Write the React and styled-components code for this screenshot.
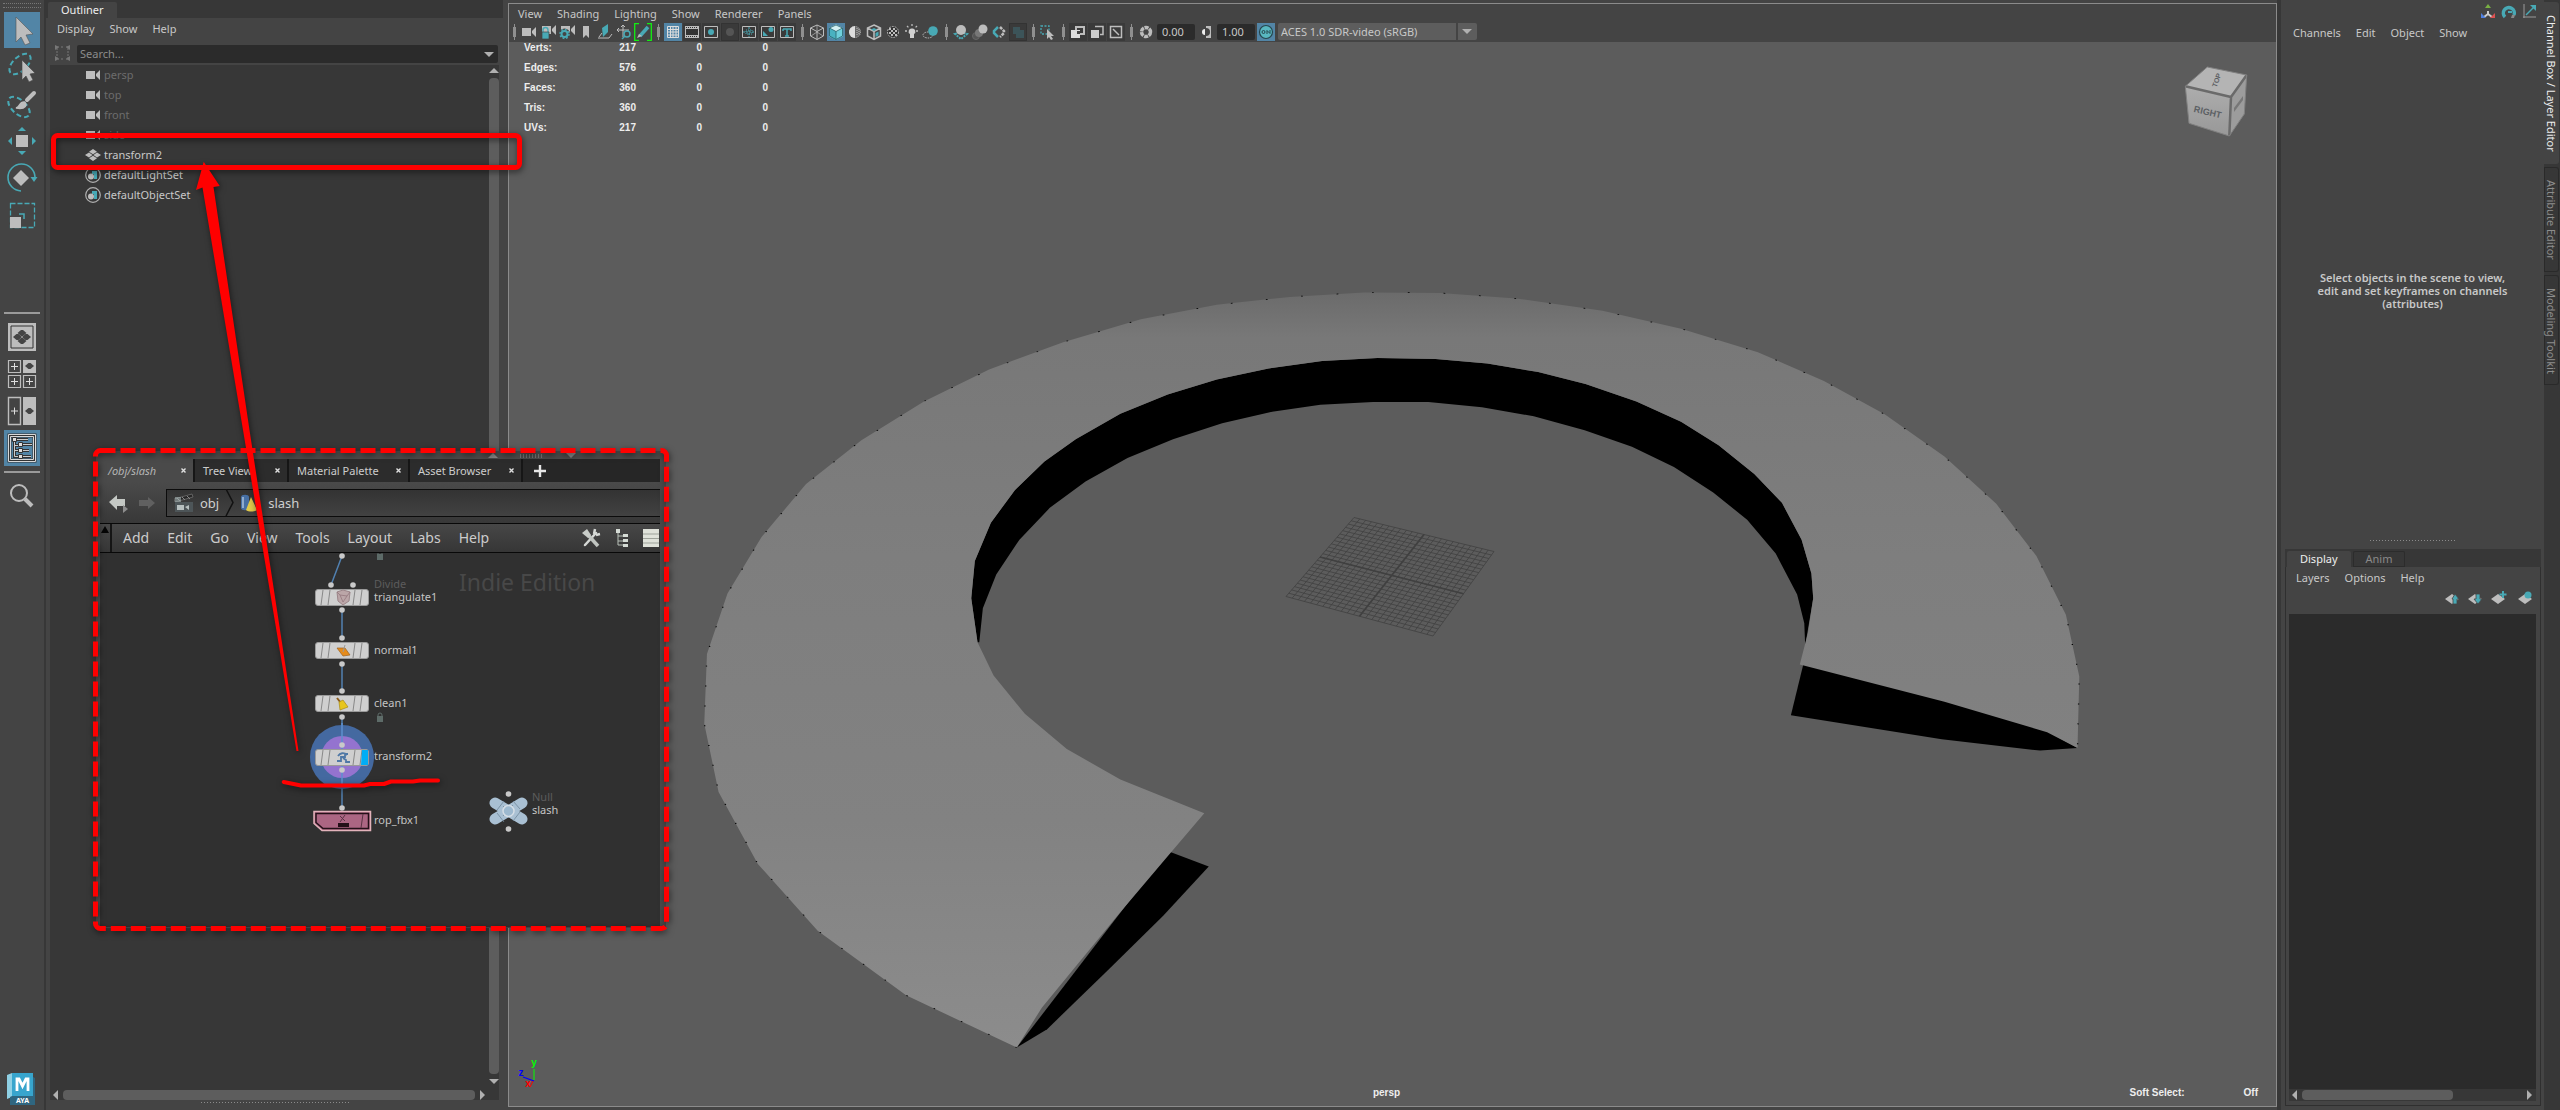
import React from "react";
import styled, { createGlobalStyle, css } from "styled-components";

const c = {
  panel: "#444444",
  dark: "#373737",
  darker: "#2b2b2b",
  view: "#5c5c5c",
  line: "#8b8b8b",
  thumb: "#5d5d5d",
  text: "#c8c8c8",
  white: "#eeeeee",
  dim: "#6c6c6c",
  icon: "#bdbdbd",
  teal: "#48a9b5",
  accent: "#5285a6",
  red: "#ff0000",
};

const Global = createGlobalStyle`
  *, *::before, *::after { box-sizing: border-box; }
  html, body { margin: 0; background: ${c.panel}; }
  body, button, input, select { font-family: "Noto Sans", "Open Sans", sans-serif; font-size: 11px; line-height: 16px; color: ${c.text}; }
  button, input, select { border: 0; margin: 0; padding: 0; background: none; border-radius: 0; }
  svg { display: block; }
`;

/* ---------- page frame ---------- */

const Page = styled.div`
  position: relative;
  display: flex;
  height: 100vh;
  overflow: hidden;
  background: ${c.panel};
`;

const Toolbox = styled.nav`
  display: flex;
  flex-direction: column;
  align-items: center;
  gap: 1px;
  width: 46px;
  padding: 3px 4px 4px;
  border-right: 2px solid ${c.dark};
  flex: none;
`;

const Grip = styled.div`
  width: ${(p) => p.$width}px;
  height: ${(p) => p.$height || 1}px;
  background-image: linear-gradient(90deg, #8a8a8a 1px, transparent 1px);
  background-size: 3px 1px;
  flex: none;
`;

const ToolGrip = styled.div`
  width: 38px;
  height: 5px;
  margin-bottom: 3px;
  border-top: 1px dotted #777777;
  border-bottom: 1px dotted #777777;
`;

const ToolButton = styled.button`
  display: grid;
  place-items: center;
  width: 36px;
  height: 36px;
  flex: none;
  background: ${(p) => (p.$active ? c.accent : "transparent")};
`;

const ToolRule = styled.hr`
  width: 36px;
  height: 2px;
  border: 0;
  margin: ${(p) => (p.$first ? "78px 0 4px" : "4px 0")};
  background: #9a9a9a;
  flex: none;
`;

const Logo = styled.div`
  margin-top: auto;
`;

/* ---------- menus and scroll bars ---------- */

const MenuBar = styled.div`
  display: flex;
  gap: ${(p) => p.$gap || 15}px;
  height: ${(p) => p.$height || 22}px;
  padding-left: ${(p) => p.$left || 9}px;
  align-items: center;
  flex: none;
`;

const MenuButton = styled.button`
  white-space: nowrap;
  color: ${c.text};
`;

const VScroll = styled.div`
  display: flex;
  flex-direction: column;
  align-items: center;
  width: 10px;
  padding: 3px 0 6px;
  gap: 5px;
`;

const HScroll = styled.div`
  display: flex;
  align-items: center;
  height: 10px;
  padding: 0 ${(p) => p.$right}px 0 3px;
  gap: 5px;
  flex: none;
`;

const Thumb = styled.div`
  flex: ${(p) => p.$grow || 1};
  align-self: stretch;
  border-radius: 4px;
  background: ${c.thumb};
`;

const Rest = styled.div`
  flex: ${(p) => p.$grow};
`;

const arrowShape = {
  up: css`border-width: 0 5px 5px; border-bottom-color: #b0b0b0;`,
  down: css`border-width: 5px 5px 0; border-top-color: #b0b0b0;`,
  left: css`border-width: 5px 5px 5px 0; border-right-color: #b0b0b0;`,
  right: css`border-width: 5px 0 5px 5px; border-left-color: #b0b0b0;`,
};

const Arrow = styled.span`
  width: 0;
  height: 0;
  flex: none;
  border: solid transparent;
  ${(p) => arrowShape[p.$dir]}
`;

/* ---------- outliner ---------- */

const Outliner = styled.section`
  display: flex;
  flex-direction: column;
  width: 457px;
  flex: none;
`;

const TabStrip = styled.div`
  display: flex;
  gap: 2px;
  height: 18px;
  padding: 2px 2px 0;
  background: ${c.dark};
  flex: none;
`;

const Tab = styled.button`
  padding: 0 13px;
  border-radius: 2px 2px 0 0;
  color: ${(p) => (p.$active ? c.white : "#8a8a8a")};
  background: ${(p) => (p.$active ? c.panel : c.dark)};
  box-shadow: ${(p) => (p.$active ? "none" : "inset 0 0 0 1px #2c2c2c")};
`;

const SearchRow = styled.div`
  display: flex;
  gap: 7px;
  height: 25px;
  padding: 5px 5px 2px 9px;
  flex: none;
`;

const SearchBox = styled.label`
  display: flex;
  flex: 1;
  align-items: center;
  padding: 0 4px 0 3px;
  border-radius: 2px;
  background: ${c.darker};
`;

const SearchInput = styled.input`
  flex: 1;
  min-width: 0;
  outline: 0;
  &::placeholder { color: #8c8c8c; opacity: 1; }
`;

const TreeBox = styled.div`
  display: flex;
  flex-direction: column;
  flex: 1;
  margin: 0 4px 2px;
  background: ${c.dark};
`;

const TreeBody = styled.div`
  display: flex;
  flex: 1;
`;

const Tree = styled.ul`
  flex: 1;
  margin: 0;
  padding: 0 0 0 35px;
  list-style: none;
`;

const TreeRow = styled.li`
  display: flex;
  align-items: center;
  gap: 3px;
  height: 20px;
  color: ${(p) => (p.$dim ? c.dim : c.text)};
`;

const OutlinerFoot = styled.div`
  display: flex;
  justify-content: center;
  height: 8px;
`;

/* ---------- viewport ---------- */

const Viewport = styled.main`
  display: flex;
  flex-direction: column;
  flex: 1;
  min-width: 0;
  margin: 3px 0 3px 5px;
  border: 1px solid ${c.line};
  background: ${c.view};
`;

const ViewHead = styled.div`
  height: 38px;
  background: ${c.panel};
  flex: none;
`;

const IconBar = styled.div`
  display: flex;
  gap: 1px;
  height: 18px;
`;

const IconButton = styled.button`
  display: grid;
  place-items: center;
  width: 18px;
  height: 18px;
  flex: none;
  background: ${(p) => (p.$active ? c.accent : p.$boxed ? "#3a3a3a" : "transparent")};
`;

const Separator = styled.span`
  width: 10px;
  height: 18px;
  flex: none;
  background:
    linear-gradient(#8f8f8f, #8f8f8f) center / 3px 10px no-repeat,
    linear-gradient(#8f8f8f, #8f8f8f) center / 1px 16px no-repeat;
`;

const NumberInput = styled.input`
  width: 38px;
  height: 16px;
  margin: 1px 1px;
  padding-left: 5px;
  border-radius: 2px;
  background: ${c.darker};
`;

const ColorSpace = styled.label`
  display: flex;
  align-items: center;
  width: 199px;
  height: 17px;
  margin-left: 2px;
  padding-right: 5px;
  border-radius: 2px;
  background: linear-gradient(90deg, #5d5d5d 178px, #444444 178px, #444444 180px, #5d5d5d 180px);
`;

const ColorSelect = styled.select`
  flex: 1;
  padding-left: 3px;
  appearance: none;
  outline: 0;
`;

const Stage = styled.div`
  display: grid;
  grid-template: minmax(0, 1fr) / minmax(0, 1fr);
  flex: 1;
  min-height: 0;
  & > * { grid-area: 1 / 1; }
`;

const Scene = styled.svg`
  width: 100%;
  height: 100%;
`;

const Hud = styled.div`
  display: flex;
  flex-direction: column;
  justify-content: space-between;
  font: bold 10px/12px "Liberation Sans", Arial, sans-serif;
  color: ${c.white};
  z-index: 1;
`;

const Stats = styled.table`
  width: 244px;
  margin-left: 15px;
  border-collapse: collapse;
  table-layout: fixed;
  th, td { height: 20px; padding: 0; text-align: right; font-weight: bold; vertical-align: top; line-height: 12px; }
  th { width: 52px; text-align: left; }
  th + td { width: 60px; }
`;

const HudFoot = styled.div`
  display: grid;
  grid-template-columns: 1fr auto 1fr;
  height: 19px;
  padding: 0 18px 0 6px;
`;

const SoftSelect = styled.span`
  display: flex;
  justify-content: flex-end;
  gap: 59px;
`;

/* ---------- channel box ---------- */

const Channels = styled.aside`
  display: flex;
  flex-direction: column;
  width: 267px;
  border-left: 4px solid ${c.dark};
  flex: none;
`;

const CornerIcons = styled.div`
  display: flex;
  justify-content: flex-end;
  gap: 5px;
  height: 24px;
  padding: 4px 6px 0 0;
`;

const Hint = styled.p`
  flex: none;
  width: 200px;
  margin: 230px auto 0;
  font-weight: 600;
  line-height: 13px;
  text-align: center;
`;

const LayerPanel = styled.section`
  display: flex;
  flex-direction: column;
  align-items: stretch;
  flex: 0 0 51vh;
  margin: auto 3px 4px 4px;
`;

const GripRow = styled.div`
  display: flex;
  justify-content: center;
  height: 9px;
`;

const LayerFrame = styled.div`
  display: flex;
  flex-direction: column;
  flex: 1;
  border: 1px solid #2f2f2f;
  border-top: 0;
`;

const LayerIcons = styled.div`
  display: flex;
  justify-content: flex-end;
  gap: 7px;
  height: 25px;
  padding: 1px 7px 0 0;
`;

const LayerList = styled.div`
  display: flex;
  flex-direction: column;
  justify-content: flex-end;
  flex: 1;
  margin: 0 4px 4px 3px;
  background: ${c.darker};
`;

const LayerScroll = styled.div`
  height: 12px;
  padding-top: 1px;
  background: ${c.dark};
`;

const SideTabs = styled.nav`
  display: flex;
  flex-direction: column;
  gap: 3px;
  width: 16px;
  padding-top: 2px;
  background: ${c.dark};
  flex: none;
`;

const SideTab = styled.button`
  writing-mode: vertical-rl;
  width: 15px;
  line-height: 15px;
  padding: 13px 0 12px;
  text-align: left;
  border-radius: 0 3px 3px 0;
  color: ${(p) => (p.$active ? c.white : "#8d8d8d")};
  background: ${(p) => (p.$active ? c.panel : c.dark)};
  box-shadow: ${(p) => (p.$active ? "none" : "inset 0 0 0 1px #2a2a2a")};
`;

/* ---------- floating node editor ---------- */

const NodeWindow = styled.section`
  position: absolute;
  left: 96px;
  top: 451px;
  display: flex;
  flex-direction: column;
  width: 570px;
  height: 477px;
  padding: 0 6px 1px 4px;
  background: #4a4a4a;
`;

const WindowGrip = styled.div`
  display: flex;
  justify-content: center;
  align-items: flex-end;
  gap: 22px;
  height: 8px;
  padding: 0 0 1px 304px;
  opacity: 0.6;
`;

const PaneTabs = styled.div`
  display: flex;
  height: 23px;
  background: #262626;
  flex: none;
`;

const PaneTab = styled.button`
  display: flex;
  justify-content: space-between;
  align-items: center;
  width: ${(p) => p.$width}px;
  padding: 0 6px 0 8px;
  white-space: nowrap;
  border-right: 2px solid #161616;
  color: ${(p) => (p.$active ? "#b5b5b5" : "#cccccc")};
  font-style: ${(p) => (p.$active ? "italic" : "normal")};
  background: ${(p) => (p.$active ? "#4a4a4a" : "#2c2c2c")};
`;

const AddTab = styled.button`
  width: 34px;
`;

const PathRow = styled.div`
  display: flex;
  align-items: center;
  height: 41px;
  padding-left: 9px;
  gap: 10px;
  background: linear-gradient(#4a4a4a, #383838);
  flex: none;
`;

const PathBox = styled.div`
  display: flex;
  align-items: center;
  flex: 1;
  gap: 6px;
  height: 28px;
  padding-left: 7px;
  border: 1px solid #0c0c0c;
  border-right: 0;
  background: linear-gradient(#333333, #424242);
`;

const Crumb = styled.button`
  display: flex;
  align-items: center;
  gap: ${(p) => p.$gap}px;
  font-size: 13px;
  color: #cfcfcf;
`;

const NodeMenu = styled.div`
  display: flex;
  align-items: center;
  gap: 18px;
  height: 30px;
  border: solid #080808;
  border-width: 1px 0;
  background: linear-gradient(#474747, #363636);
  flex: none;
  button { font-size: 14px; color: #cccccc; }
`;

const MenuHandle = styled.span`
  display: flex;
  align-self: stretch;
  justify-content: center;
  width: 12px;
  margin-right: -7px;
  padding-top: 2px;
  border-right: 2px solid #151515;
`;

const MenuIcons = styled.span`
  display: flex;
  align-items: center;
  gap: 14px;
  margin-left: auto;
  padding-right: 1px;
`;

const Network = styled.div`
  position: relative;
  flex: 1;
  overflow: hidden;
  background: #303030;
`;

const NodeLabel = styled.span`
  position: absolute;
  left: ${(p) => p.$x}px;
  top: ${(p) => p.$y}px;
  white-space: nowrap;
  line-height: 14px;
  color: ${(p) => (p.$dim ? "#5c5c5c" : "#c4c4c4")};
`;

const Edition = styled.span`
  position: absolute;
  left: 359px;
  top: 14px;
  font-size: 23px;
  line-height: 30px;
  color: #484848;
`;

const Markup = styled.svg`
  position: absolute;
  left: 0;
  top: 0;
  pointer-events: none;
  filter: drop-shadow(1px 2px 3px rgba(0, 0, 0, 0.55));
`;

/* ---------- drawings ---------- */

const Svg = ({ s = 18, w, h, box, children }) => (
  <svg width={w || s} height={h || s} viewBox={box || `0 0 ${w || s} ${h || s}`} fill="none" aria-hidden="true">
    {children}
  </svg>
);

const I = c.icon;
const T = c.teal;

const tools = {
  select: <path d="M12 5v25l5-5 4 8 5-2-4-8 7-1z" fill={I} stroke="#555" strokeWidth=".6" />,
  lasso: (
    <>
      <ellipse cx="16" cy="15" rx="13" ry="7" transform="rotate(-43 16 15)" stroke={T} strokeWidth="2" strokeDasharray="5 3" />
      <path d="M18 11v20l4-4 3 6 4-2-3-6 5-1z" fill={I} stroke={c.panel} strokeWidth=".6" />
    </>
  ),
  paint: (
    <>
      <ellipse cx="15" cy="21" rx="13" ry="7" transform="rotate(42 15 21)" stroke={T} strokeWidth="2" strokeDasharray="5 3" />
      <path d="m23 14 7-7" stroke={I} strokeWidth="4" strokeLinecap="round" />
      <path d="M12 22c4-1 3-6 8-6 4 2 2 8-8 6z" fill={I} stroke={I} strokeWidth="1.500" />
    </>
  ),
  move: (
    <>
      <path d="M12 12h12v12H12z" fill={I} />
      <path d="m18 4 4 4h-8zM18 32l4-4h-8zM4 18l4-4v8zM32 18l-4-4v8z" fill={T} />
    </>
  ),
  rotate: (
    <>
      <path d="m17 10 8 8-8 8-8-8z" fill={I} />
      <path d="M17 31A13.500 13.500 0 1 1 31 17" stroke={T} strokeWidth="1.600" />
      <path d="M26.500 17h7l-3.500 5z" fill={T} />
    </>
  ),
  scale: (
    <>
      <path d="M6.500 6.500h24v24h-24z" stroke={T} strokeWidth="1.300" strokeDasharray="5 2" />
      <path d="M6 20h11v11H6z" fill={I} />
      <path d="M15 17h5v5" stroke={T} strokeWidth="1.500" />
    </>
  ),
};

const diamond = (x, y) => (
  <path d={`M${x - 4.5} ${y}l3.500-3h2l3.500 3l-3.500 3h-2z`} fill="#444" />
);

const layouts = {
  single: (
    <>
      <path d="M4 4h28v28H4z" fill={I} />
      <path d="M7 7h22v22H7z" stroke="#333" />
      {diamond(18, 14)}{diamond(13.5, 18)}{diamond(22.5, 18)}{diamond(18, 22)}
    </>
  ),
  four: (
    <>
      <path d="M19 4h13v13H19z" fill={I} />
      <path d="M4.500 4.500h12v12h-12zM4.500 19.500h12v12h-12zM19.500 19.500h12v12h-12z" stroke={I} strokeWidth="1.200" />
      <path d="M7 10.500h7M10.500 7v7M7 25.500h7M10.500 22v7M22 25.500h7M25.500 22v7" stroke="#ddd" />
      {diamond(25.5, 10)}
    </>
  ),
  two: (
    <>
      <path d="M4.500 4.500h12v27h-12z" stroke={I} strokeWidth="1.400" />
      <path d="M19 4h13v28H19z" fill={I} />
      <path d="M7 18h7M10.500 14.500v7" stroke="#ddd" />
      {diamond(25.5, 18)}
    </>
  ),
  outline: (
    <>
      <path d="M5.500 5.500h25v25h-25z" stroke="#333" strokeWidth="4" />
      <path d="M4.500 4.500h27v27h-27zM6.500 6.500h23v23h-23z" stroke="#d8d8d8" />
      <path d="M10.500 11v15.500H18M11 15.500h6M11 20.500h6M12 9.500h12M19 14.500h9M19 20.500h6M19 26.500h8" stroke="#333" strokeWidth="3" />
      <path d="M10.500 11v15.500H18M11 15.500h6M11 20.500h6M12 9.500h12M19 14.500h9M19 20.500h6M19 26.500h8" stroke="#ccc" />
      <path d="M8.500 7.500h4v4h-4zM14.500 12.500h4v4h-4zM14.500 18.500h4v4h-4zM14.500 24.500h4v4h-4z" fill="#ddd" stroke="#333" />
    </>
  ),
};

const camera = (x = 0, y = 0) => <path d={`M${x + 2} ${y + 5}h9v8H${x + 2}zM${x + 16} ${y + 4}v10l-4-4v-2z`} fill={I} />;
const frame = <path d="M2.500 3.500h13v11h-13z" stroke={I} />;
const cubeEdges = "M9 2l6.500 3v8L9 16.500 2.500 13V5zM2.500 5 9 8.500 15.500 5M9 8.500v8";

const viewIcons = {
  camera: camera(),
  lock: <>{camera(1, -2)}<path d="M4 9V7a2.500 2.500 0 0 1 5 0v2" stroke={T} strokeWidth="1.400" /><path d="M3 9h7v7H3z" fill={T} stroke="#444" strokeWidth=".7" /></>,
  gear: <>{camera(1, -2)}<circle cx="6.500" cy="11" r="5.500" fill={c.panel} /><circle cx="6.500" cy="11" r="3" stroke={T} strokeWidth="2" /><circle cx="6.500" cy="11" r="4.500" stroke={T} strokeWidth="1.500" strokeDasharray="1.800 1.700" /></>,
  bookmark: <path d="M6 3h6v12l-3-3-3 3z" fill={I} />,
  plane: <><path d="M2 15h11l3-4" stroke={I} /><path d="M3 14l3-4" stroke={I} /><path d="m6 5 6-4v8l-5 5z" fill={T} /></>,
  zoom: <><path d="M8 2v12M2 7h12M6 4l2-2 2 2M4 5 2 7l2 2" stroke={I} /><circle cx="12" cy="11" r="3" fill={c.panel} stroke={T} strokeWidth="1.500" /><path d="m10 13-3 3" stroke={T} strokeWidth="1.500" /></>,
  pencil: <><path d="M5 .7H.7v16.600H5M13 .7h4.300v16.600H13" stroke="#12ef12" strokeWidth="1.300" /><path d="m6 13 8-9" stroke={T} strokeWidth="3.500" /><path d="m3 15 2-4 3 2z" fill={I} /></>,
  grid: <path d="M3.500 3.500h11v11h-11zM6.500 3v12M9 3v12M12 3v12M3 6.500h12M3 9h12M3 12h12" stroke="#ddd" />,
  film: <><path d="M2 3h14v12H2z" fill={I} /><path d="M3 6h12v6H3z" fill="#333" /><path d="M3 4.500h12M3 13.500h12" stroke="#333" strokeDasharray="1 1" /></>,
  dot: <>{frame}<circle cx="9" cy="9" r="3" fill={T} /></>,
  off: <><path d="M.5.5h17v17H.5z" stroke="#333" /><circle cx="9" cy="9" r="4" fill="#555" /></>,
  field: <>{frame}<path d="M9 4v10M3 9h12" stroke={T} strokeDasharray="2 1" /><path d="M6 7h6v4H6z" stroke={T} strokeDasharray="1 1" /></>,
  image: <>{frame}<circle cx="12" cy="6.500" r="2.500" fill={T} /><path d="M4 13V8l5 5z" fill={T} /></>,
  text: <>{frame}<path d="M5 6h8v2M9 6v7M7 13h4M5 6v2" stroke={T} strokeWidth="1.500" /></>,
  wire: <><path d={cubeEdges} stroke={I} /><path d="M9 2v7l-6 4M9 9l6 4" stroke={I} strokeWidth=".7" /></>,
  cube: <><path d="M9 1.500 16 5v8.500L9 17l-7-3.500V5z" fill="#6fd0dc" /><path d="M9 1.500 16 5 9 8.500 2 5z" fill="#d2f0f2" /><path d="M9 8.500V17l-7-3.500V5z" fill="#49b2c1" /><path d={cubeEdges} stroke="#28606a" strokeWidth=".8" /></>,
  half: <><circle cx="9" cy="9" r="5.500" fill="#666" stroke={I} strokeDasharray="1 1" /><path d="M9 3a6 6 0 0 0 0 12z" fill="#ddd" /><path d="M11 5v8M13 6v6" stroke={I} strokeDasharray="1 1" /></>,
  textured: <><path d={cubeEdges} stroke={I} strokeWidth="1.500" /><path d="m9 5 3 1.500-3 1.500-3-1.500zM10.500 10l3-1.500v4l-3 1.500z" fill={T} /></>,
  checker: <><circle cx="9" cy="9" r="6" fill="#333" /><circle cx="9" cy="9" r="5.500" stroke={I} strokeDasharray="2 1" /><path d="M5 6h8M5 10h8" stroke={I} strokeWidth="2" strokeDasharray="2 2" /><path d="M7 8h6M7 12h6" stroke={I} strokeWidth="2" strokeDasharray="2 2" /></>,
  light: <><path d="M9 5.500a3 3 0 0 1 2 5.500v4H7v-4a3 3 0 0 1 2-5.500z" fill="#d0d0d0" /><path d="M9 1v2M2 8h3M13 8h3M4 3l2 2M14 3l-2 2" stroke={I} strokeWidth="1.300" strokeDasharray="2 1" /></>,
  shadow: <><ellipse cx="6" cy="12" rx="5" ry="3" stroke={I} strokeDasharray="1.500 1" /><circle cx="11" cy="8" r="4.800" fill={T} /></>,
  occlusion: <><path d="M3 11l6-2 6 2-6 5z" stroke={T} strokeWidth="2" strokeDasharray="2 1" /><circle cx="9" cy="7" r="5" fill="#bcbcbc" /></>,
  blur: <><circle cx="5" cy="13" r="3.500" fill="#555" stroke="#666" /><circle cx="8" cy="10" r="4" fill="#777" /><circle cx="12" cy="6" r="4.500" fill={I} /></>,
  alias: <><path d="M8 4 4 8v2l4 4" stroke={T} strokeWidth="2.500" /><path d="m10 4 4 4v2l-4 4" stroke={I} strokeWidth="2.500" strokeDasharray="3 1" /></>,
  dof: <><path d="M.5.5h17v17H.5z" stroke="#333" /><path d="M4 4h7v7H4zM7 7h8v8H7z" fill="#3c5459" /></>,
  isolate: <><path d="M2 3h8v8H2z" stroke={T} strokeWidth="1.300" strokeDasharray="2 1.500" /><path d="M8 6v10l2-2 2 3 2-1-2-3h3z" fill={I} /></>,
  overlap: <><path d="M7 4h8v7H7z" stroke={I} strokeWidth="2" /><path d="M2 7h9v8H2z" fill="#ddd" /><path d="M8 8h3v3H8z" fill="#444" /></>,
  stack: <><path d="M7 3.500h8v8h-3" stroke={I} strokeWidth="1.500" /><path d="M3 7h8v8H3z" fill="#ccc" /></>,
  diag: <><path d="M3.500 3.500h11v11h-11z" stroke={I} strokeWidth="1.500" /><path d="m6 6 6 6" stroke={I} strokeWidth="1.500" /></>,
  aperture: <><circle cx="9" cy="9" r="4.500" stroke={I} strokeWidth="3.500" strokeDasharray="4 .8" /></>,
  gamma: <><path d="M9 3h5v12H9v-2a4 4 0 0 0 0-8z" fill={I} /><path d="M8 6a3 3 0 0 0 0 6z" fill="#eee" /></>,
  on: (
    <>
      <circle cx="9" cy="9" r="6.500" fill="#58b7c0" stroke="#26454c" strokeWidth="1.200" />
      <circle cx="6.500" cy="9" r="1.500" stroke="#26454c" />
      <path d="M10 11V7.500l3 3V7" stroke="#26454c" />
    </>
  ),
};

const viewGroups = [
  ["camera", "lock", "gear", "bookmark", "plane", "zoom", "pencil"],
  ["grid", "film", "dot", "off", "field", "image", "text"],
  ["wire", "cube", "half", "textured", "checker", "light", "shadow"],
  ["occlusion", "blur", "alias", "dof"],
  ["isolate"],
  ["overlap", "stack", "diag"],
];
const active = ["grid", "cube"];
const boxed = ["film", "dot", "off", "field", "image", "text", "dof", "overlap", "stack", "diag"];

const outlinerIcons = {
  camera: <path d="M1 4h9v8H1zM15 3v10l-4-4V7z" fill={I} />,
  mesh: <path d="m8 2 4 2.700-4 2.600-4-2.600zM8 8.700l4 2.600L8 14l-4-2.700zM4 5.400 7.600 8 4 10.600 0 8zM12 5.400 16 8l-4 2.600L8.400 8z" fill={I} />,
  set: <><circle cx="8" cy="8" r="7.300" stroke="#b0b0b0" strokeWidth="1.200" /><path d="M7 4h5v8h-3V7H7z" fill={T} /><circle cx="6" cy="9.500" r="3" fill={I} /></>,
};

const nodes = [
  ["persp", "camera", true],
  ["top", "camera", true],
  ["front", "camera", true],
  ["side", "camera", true],
  ["transform2", "mesh", false],
  ["defaultLightSet", "set", false],
  ["defaultObjectSet", "set", false],
];

const stats = [["Verts:", 217], ["Edges:", 576], ["Faces:", 360], ["Tris:", 360], ["UVs:", 217]];

const innerRim =
  "1258,640 1256,590 1245,522 1223,448 1192,390 1152,332 1110,285 1060,244 1003,209 950,185 893,168 835,159 770,157 708,163 648,178 590,200 535,230 482,269 432,320 397,365 364,422 337,488 319,565 315,640 322,728";
const outerRim =
  "366,1543 242,1438 143,1308 76,1174 32,1029 16,892 19,752 42,630 80,517 130,410 192,322 262,244 335,180 418,125 505,79 590,50 672,34 755,25 840,26 925,37 1022,62 1110,98 1196,145 1270,203 1338,270 1405,355 1463,450 1508,555 1541,673 1556,797 1554,941";
const farFoot =
  "324,728 328,660 343,592 369,522 403,458 443,405 490,358 541,320 596,288 652,265 706,251 765,245 827,245 887,256 945,274 1002,302 1055,335 1102,376 1146,427 1184,482 1216,550 1240,632 1248,690 1249,735";

const mix = (a, b, t) => [a[0] + (b[0] - a[0]) * t, a[1] + (b[1] - a[1]) * t];
const corners = [[1354, 517.5], [1494, 551.5], [1433, 636], [1286, 596.5]];
const GroundGrid = () => {
  const n = 24;
  const [A, B, C, D] = corners;
  const seg = (p, q) => `M${p}L${q}`;
  let d = "";
  for (let i = 0; i <= n; i++) {
    const t = i / n;
    d += seg(mix(A, B, t), mix(D, C, t)) + seg(mix(A, D, t), mix(B, C, t));
  }
  return (
    <g stroke="#404040">
      <path d={d} strokeWidth=".8" />
      <path d={seg(mix(A, B, 0.5), mix(D, C, 0.5)) + seg(mix(A, D, 0.5), mix(B, C, 0.5))} strokeWidth="1.800" />
    </g>
  );
};

const SceneDrawing = () => (
  <Scene viewBox="509 42 1767 1064" preserveAspectRatio="xMidYMid meet" fill="none" aria-label="persp view">
    <defs>
      <linearGradient id="shade" x1="0" y1="0" x2="0" y2="1">
        <stop offset="0" stopColor="#6b6b6b" />
        <stop offset=".06" stopColor="#787878" />
        <stop offset=".35" stopColor="#7e7e7e" />
        <stop offset=".7" stopColor="#828282" />
        <stop offset="1" stopColor="#8c8c8c" />
      </linearGradient>
      <linearGradient id="face" x1="0" y1="0" x2="0" y2="1">
        <stop offset="0" stopColor="#adadad" />
        <stop offset="1" stopColor="#989898" />
      </linearGradient>
    </defs>
    <GroundGrid />
    <svg x="690" y="280" width="1400" height="780" viewBox="0 0 1568 1568" preserveAspectRatio="none">
      <polygon points={`${innerRim} ${farFoot}`} fill="#000" />
      <polygon points="1247,772 1405,846 1520,907 1554,941 1512,946 1402,923 1233,875" fill="#000" />
      <polygon points="535,1148 581,1179 530,1278 470,1384 400,1506 366,1543" fill="#000" />
      <polygon
        points={`${outerRim} 1520,909 1405,848 1243,773 1252,710 ${innerRim} 340,795 375,872 422,943 482,1004 576,1072 540,1148 480,1275 394,1463`}
        fill="url(#shade)"
      />
      <polyline points={outerRim} stroke="#000" strokeWidth="1.500" strokeDasharray="2 38" />
    </svg>
    <g strokeLinejoin="round">
      <path d="M2207.300 67 2246.700 75 2231 97 2185.300 86.300z" fill="#b4b4b4" />
      <path d="M2185.300 86.300 2231 97 2229.300 136 2189 123.300z" fill="url(#face)" />
      <path d="M2231 97 2246.700 75 2244.300 114 2229.300 136z" fill="#9c9c9c" />
      <path d="M2185.300 86.300 2231 97 2246.700 75M2231 97l-1.700 39" stroke="#6a6a6a" strokeWidth="2.500" />
      <path d="M2207.300 67 2246.700 75 2244.300 114 2229.300 136 2189 123.300 2185.300 86.300z" stroke="#808080" />
      <path d="m2234 108 9-12v4l-9 12z" fill="#777" />
    </g>
    <g fontFamily="Liberation Sans, Arial, sans-serif" fontWeight="bold" fill="#5c6064" textAnchor="middle">
      <text x="2207" y="115" fontSize="9" transform="rotate(13 2207 115)">RIGHT</text>
      <text x="2219" y="81" fontSize="7" transform="rotate(-70 2219 81)">TOP</text>
    </g>
    <path d="M534 1069v11" stroke="#00ff00" />
    <path d="m523 1077 11 4" stroke="#0000ff" strokeWidth="1.300" />
    <path d="m533 1081-3 6" stroke="#ff0000" />
    <g fontFamily="Liberation Sans, Arial, sans-serif" fontSize="10" fontWeight="bold" textAnchor="middle">
      <text x="534" y="1066" fill="#00ff00">y</text>
      <text x="521" y="1076" fill="#0000ff">z</text>
      <text x="528" y="1087" fill="#ff0000">x</text>
    </g>
  </Scene>
);

const Dot = ({ x, y }) => <circle cx={x} cy={y} r="2.800" fill="#c9c9c9" />;

const NodeBody = ({ x = 215, y, children }) => (
  <g transform={`translate(${x} ${y})`}>
    <rect x=".5" y=".5" width="53" height="16" rx="2.500" fill="#cfcfcf" stroke="#9a9a9a" />
    <path d="M8 1 6 16M15 1l-2 15M40 1l-2 15M47 1l-2 15" stroke="#888" />
    {children}
  </g>
);

const Lock = ({ x, y }) => (
  <g>
    <path d={`M${x - 2} ${y}v-2a2 2 0 0 1 4 0v2`} stroke="#5d6b68" />
    <path d={`M${x - 3} ${y - 1}h6v6h-6z`} fill="#5d6b68" />
  </g>
);

const NetworkDrawing = () => (
  <svg width="560" height="374" fill="none" aria-hidden="true">
    <path d="m242 3-11 29M242 57v28M242 111v27M242 164v28M242 217v38" stroke="#5180b0" strokeWidth="1.500" />
    <Lock x={280} y={2} />
    <Dot x={242} y={3} /><Dot x={231} y={32} /><Dot x={253} y={32} />
    <NodeBody y={36}>
      <path d="m22 3 6-2 7 2-1 9-6 4-5-4z" fill="#bba6a8" stroke="#9b8589" />
      <path d="m25 6 7 1-4 6zM22 3l3 3M35 3l-3 4" stroke="#94777d" strokeWidth=".8" />
    </NodeBody>
    <Dot x={242} y={57} /><Dot x={242} y={85} />
    <NodeBody y={89}>
      <path d="m22 6 8 0 5 7-7 1z" fill="#e58b1b" stroke="#9b6323" strokeWidth=".7" />
      <path d="m28 10 2-7" stroke="#999" />
    </NodeBody>
    <Dot x={242} y={111} /><Dot x={242} y={138} />
    <NodeBody y={142}>
      <path d="m22 3 4 5" stroke="#8d5c1c" strokeWidth="2" />
      <path d="m24 7 4-2 5 7-8 3z" fill="#e7c51c" stroke="#a68a16" strokeWidth=".7" />
    </NodeBody>
    <Dot x={242} y={164} />
    <Lock x={280} y={164} />
    <circle cx="242" cy="204" r="32" fill="#4469a0" />
    <circle cx="242" cy="204" r="21" fill="#9473cf" />
    <path d="M242 170v64" stroke="#5d8fcf" strokeWidth="1.500" />
    <NodeBody y={196}>
      <path d="M47 1h6v15h-7z" fill="#00adf5" />
      <path d="M22 12h4V8h4V5h3M23 7c2-3 6-4 9-1M28 9l3 2v2h4" stroke="#4f78a6" strokeWidth="1.800" />
    </NodeBody>
    <Dot x={242} y={192} /><Dot x={242} y={217} /><Dot x={242} y={255} />
    <path d="M214 258.500h56.500v19H222l-8-7z" fill="#ac6683" stroke="#e3b3bb" strokeWidth="1.500" />
    <path d="M216 260.500h52.500v15H223l-7-6z" stroke="#241018" strokeWidth="1.500" />
    <path d="m263 261-2 14M240 263l5 5M245 262l-5 7" stroke="#5a3344" />
    <path d="M238 270h11v4h-11z" fill="#241018" />
    <g stroke="#a9c0d3" strokeWidth="11" strokeLinecap="round">
      <path d="m395 250 27 16M422 250l-27 16" />
    </g>
    <path d="m397 257 7-9M403 263l10-11M413 248l7 8M403 253l10 10M397 260l7 9M413 268l7-9" stroke="#6f8799" strokeWidth=".8" />
    <circle cx="408.500" cy="258" r="5.500" fill="#9db9cf" stroke="#d5dee6" strokeWidth="1.500" />
    <Dot x={408.5} y={241} /><Dot x={408.5} y={276} />
  </svg>
);

const labels = [
  ["Divide", 274, 24, true],
  ["triangulate1", 274, 37],
  ["normal1", 274, 90],
  ["clean1", 274, 143],
  ["transform2", 274, 196],
  ["rop_fbx1", 274, 260],
  ["Null", 432, 237, true],
  ["slash", 432, 250],
];

const paneTabs = [["/obj/slash", 95, true], ["Tree View", 94], ["Material Palette", 121], ["Asset Browser", 113]];

const Menu = ({ items, ...rest }) => (
  <MenuBar {...rest}>
    {items.map((t) => <MenuButton key={t}>{t}</MenuButton>)}
  </MenuBar>
);

const layerPlane = <path d="m1 9 7-5 7 5-7 5z" fill={I} />;

export default function App() {
  return (
    <Page>
      <Global />
      <Toolbox aria-label="Tools">
        <ToolGrip />
        {Object.entries(tools).map(([k, art]) => (
          <ToolButton key={k} $active={k === "select"} aria-label={k}><Svg s={36}>{art}</Svg></ToolButton>
        ))}
        <ToolRule $first />
        {Object.entries(layouts).map(([k, art]) => (
          <ToolButton key={k} $active={k === "outline"} aria-label={k}><Svg s={36}>{art}</Svg></ToolButton>
        ))}
        <ToolRule />
        <ToolButton aria-label="search">
          <Svg s={36}><circle cx="15" cy="15" r="8" stroke={I} strokeWidth="2" /><path d="m21 21 7 7" stroke={I} strokeWidth="4" /></Svg>
        </ToolButton>
        <Logo>
          <Svg w={30} h={33}>
            <path d="M0 2 5 0v24l-5 2z" fill="#8fd0e4" />
            <path d="M5 0h21v23H5z" fill="#38a5cd" />
            <path d="M26 4l2 1v27H3v-8l2-1h21z" fill="#2f6680" />
            <path d="M10 18V6h2l3.500 7L19 6h2v12" stroke="#fff" strokeWidth="2.800" />
            <text x="15.500" y="30" fontSize="7" fontWeight="bold" fontFamily="Noto Sans, sans-serif" fill="#fff" textAnchor="middle">AYA</text>
          </Svg>
        </Logo>
      </Toolbox>

      <Outliner>
        <TabStrip><Tab $active>Outliner</Tab></TabStrip>
        <Menu items={["Display", "Show", "Help"]} $left={11} />
        <SearchRow>
          <Svg w={15} h={16}>
            <path d="M4 2H2v12h2M11 2h2v12h-2M6 2h3M6 14h3" stroke="#777" strokeDasharray="2 1" />
            <path d="M0 0l4 2-4 3zM15 0l-4 2 4 3zM0 11l4 3-4 2zM15 11l-4 3 4 2z" fill="#777" />
          </Svg>
          <SearchBox><SearchInput aria-label="Search" placeholder="Search..." /><Arrow $dir="down" /></SearchBox>
        </SearchRow>
        <TreeBox>
          <TreeBody>
            <Tree>
              {nodes.map(([name, icon, dim]) => (
                <TreeRow key={name} $dim={dim}><Svg s={16}>{outlinerIcons[icon]}</Svg>{name}</TreeRow>
              ))}
            </Tree>
            <VScroll><Arrow $dir="up" /><Thumb /><Arrow $dir="down" /></VScroll>
          </TreeBody>
          <HScroll $right={14}><Arrow $dir="left" /><Thumb /><Arrow $dir="right" /></HScroll>
        </TreeBox>
        <OutlinerFoot><Grip $width={148} /></OutlinerFoot>
      </Outliner>

      <Viewport>
        <ViewHead>
          <Menu items={["View", "Shading", "Lighting", "Show", "Renderer", "Panels"]} $height={19} />
          <IconBar>
            {viewGroups.map((group, g) => (
              <React.Fragment key={g}>
                <Separator />
                {group.map((k) => (
                  <IconButton key={k} aria-label={k} $active={active.includes(k)} $boxed={boxed.includes(k)}>
                    <Svg>{viewIcons[k]}</Svg>
                  </IconButton>
                ))}
              </React.Fragment>
            ))}
            <Separator />
            <IconButton aria-label="exposure"><Svg>{viewIcons.aperture}</Svg></IconButton>
            <NumberInput aria-label="Exposure" defaultValue="0.00" />
            <IconButton aria-label="gamma"><Svg>{viewIcons.gamma}</Svg></IconButton>
            <NumberInput aria-label="Gamma" defaultValue="1.00" />
            <IconButton $active aria-label="ON"><Svg>{viewIcons.on}</Svg></IconButton>
            <ColorSpace>
              <ColorSelect aria-label="View transform"><option>ACES 1.0 SDR-video (sRGB)</option></ColorSelect>
              <Arrow $dir="down" />
            </ColorSpace>
          </IconBar>
        </ViewHead>
        <Stage>
          <SceneDrawing />
          <Hud>
            <Stats>
              <tbody>
                {stats.map(([k, v]) => (
                  <tr key={k}><th scope="row">{k}</th><td>{v}</td><td>0</td><td>0</td></tr>
                ))}
              </tbody>
            </Stats>
            <HudFoot>
              <span /><span>persp</span>
              <SoftSelect><span>Soft Select:</span><span>Off</span></SoftSelect>
            </HudFoot>
          </Hud>
        </Stage>
      </Viewport>

      <Channels>
        <CornerIcons>
          <Svg s={16}><path d="M8 7v3l-4 3M8 10l4 3" stroke="#ccc" strokeWidth="2" /><path d="m8 0 3 4H5z" fill="#79b043" /><path d="M1 9l5 5H1z" fill="#4f80e0" /><path d="M15 9l-5 5h5z" fill="#dd5151" /></Svg>
          <Svg s={16}><path d="M4 13A5.500 5.500 0 1 1 13 11" stroke={T} strokeWidth="3.500" /><path d="M7 8h4" stroke={T} strokeWidth="2" /><path d="M11 11h3l-1 3h-3z" fill="#888" /></Svg>
          <Svg s={16}><path d="M2 0v14M1 13h13" stroke="#999" /><path d="m4 11 8-8" stroke={T} strokeWidth="1.500" /><path d="M8 1h6v6z" fill={T} /></Svg>
        </CornerIcons>
        <Menu items={["Channels", "Edit", "Object", "Show"]} $left={12} $height={17} />
        <Hint>Select objects in the scene to view, edit and set keyframes on channels (attributes)</Hint>
        <LayerPanel>
          <GripRow><Grip $width={86} /></GripRow>
          <TabStrip><Tab $active>Display</Tab><Tab>Anim</Tab></TabStrip>
          <LayerFrame>
            <Menu items={["Layers", "Options", "Help"]} $left={10} />
            <LayerIcons>
              <Svg s={16}>{layerPlane}<path d="m11 4 4 5h-2v5H9V9H8z" fill={T} stroke="#444" strokeWidth=".8" /></Svg>
              <Svg s={16}>{layerPlane}<path d="M9 4h4v5h2l-4 5-4-5h2z" fill={T} stroke="#444" strokeWidth=".8" /></Svg>
              <Svg w={20} h={16}>{layerPlane}<path d="M13 1v7M9.500 4.500h7" stroke={T} strokeWidth="2" /></Svg>
              <Svg s={16}>{layerPlane}<circle cx="11" cy="5" r="3.500" fill={T} /></Svg>
            </LayerIcons>
            <LayerList>
              <LayerScroll>
                <HScroll $right={4}><Arrow $dir="left" /><Thumb $grow={154} /><Rest $grow={66} /><Arrow $dir="right" /></HScroll>
              </LayerScroll>
            </LayerList>
          </LayerFrame>
        </LayerPanel>
      </Channels>
      <SideTabs>
        <SideTab $active>Channel Box / Layer Editor</SideTab>
        <SideTab>Attribute Editor</SideTab>
        <SideTab>Modeling Toolkit</SideTab>
      </SideTabs>

      <NodeWindow>
        <WindowGrip><Arrow $dir="up" /><Grip $width={24} $height={4} /><Arrow $dir="down" /></WindowGrip>
        <PaneTabs>
          {paneTabs.map(([t, w, on]) => (
            <PaneTab key={t} $width={w} $active={on}>
              {t}<Svg s={7}><path d="m1.500 1.500 4 4m0-4-4 4" stroke="#e0e0e0" strokeWidth="1.400" /></Svg>
            </PaneTab>
          ))}
          <AddTab aria-label="Add tab"><Svg w={34} h={12}><path d="M17 0v12M11 6h12" stroke="#e6e6e6" strokeWidth="2.400" /></Svg></AddTab>
        </PaneTabs>
        <PathRow>
          <Svg s={20}><path d="m0 9 8-7v4h8v7H8v4z" fill="#c4c8c4" /><path d="m14 12 5 4-5 4z" fill="#8d8d8d" /></Svg>
          <Svg w={17} h={14}><path d="M16 7 9 1v3H0v6h9v3z" fill="#606060" /></Svg>
          <PathBox>
            <Crumb $gap={6}>
              <Svg w={20} h={20}>
                <path d="m0 6 18-5 1 3L1 9z" fill="#262626" stroke="#777" strokeWidth=".7" />
                <path d="m3 5 3 3M8 4l3 3M13 3l3 3" stroke="#888" />
                <path d="M1 9h18v10H1z" fill="#4d5558" />
                <path d="M3 12h7v5H3zM11 14l4-2v5z" fill="#b7c0c0" />
                <path d="M1 4h6v5H1z" fill="#a7b5b5" opacity=".6" />
              </Svg>
              obj
            </Crumb>
            <Svg w={10} h={27}><path d="m1 0 7 13.500L1 27" stroke="#111" strokeWidth="1.500" /></Svg>
            <Crumb $gap={10}>
              <Svg w={17} h={18}>
                <path d="M0 3c0-3 8-3 8 0v11c0 3-8 3-8 0z" fill="#466fa4" />
                <path d="M2 3v11" stroke="#a8c1dc" strokeWidth="1.500" />
                <path d="m10 3 6 13c-2 2-9 2-11 0z" fill="#e0c94a" />
              </Svg>
              slash
            </Crumb>
          </PathBox>
        </PathRow>
        <NodeMenu>
          <MenuHandle><Svg w={8} h={8}><path d="m4 0 4 7H0z" fill="#050505" /></Svg></MenuHandle>
          {["Add", "Edit", "Go", "View", "Tools", "Layout", "Labs", "Help"].map((t) => <MenuButton key={t}>{t}</MenuButton>)}
          <MenuIcons>
            <Svg s={20}>
              <path d="m4 17 11-12" stroke="#d5d8d5" strokeWidth="2.500" strokeLinecap="round" />
              <path d="M13 6l1-5M15 7l4-1" stroke="#d5d8d5" strokeWidth="2.500" />
              <path d="m8 8 9 10" stroke="#c0c4c0" strokeWidth="3.500" />
              <path d="M1 5l5-4 4 6-3 3z" fill="#c8ccc8" />
            </Svg>
            <Svg w={14} h={18}>
              <path d="M1 0h4v4H1zM8 5h5v3H8zM8 10h5v3H8zM8 15h5v3H8z" fill="#d5dbd5" />
              <path d="M3 4v12h5M3 7h5M3 12h5" stroke="#b8c0b8" />
            </Svg>
            <Svg w={16} h={18}>
              <path d="M0 0h16v18H0z" fill="#dfe2da" />
              <path d="M0 5h16M0 9.500h16M0 14h16" stroke="#9da29a" strokeWidth="1.200" />
            </Svg>
          </MenuIcons>
        </NodeMenu>
        <Network>
          <NetworkDrawing />
          <Edition>Indie Edition</Edition>
          {labels.map(([t, x, y, dim]) => <NodeLabel key={t + y} $x={x} $y={y} $dim={dim}>{t}</NodeLabel>)}
        </Network>
      </NodeWindow>

      <Markup width="720" height="960" fill="none" aria-hidden="true">
        <rect x="53.500" y="135.500" width="466" height="32" rx="4" stroke={c.red} strokeWidth="5" />
        <rect x="95.500" y="450.500" width="571" height="478" rx="5" stroke={c.red} strokeWidth="5" strokeDasharray="15 5" />
        <path d="M203.700 161.700 219.700 186l-6.200 1L249.500 430 298.500 751h-2L243 430 202.500 187.500l-6.500 2.500z" fill={c.red} />
        <path d="M283.700 782 301 785.500h63l6-1.500h14l7-2.500h22l7-1h18" stroke={c.red} strokeWidth="4" strokeLinecap="round" strokeLinejoin="round" />
      </Markup>
    </Page>
  );
}
